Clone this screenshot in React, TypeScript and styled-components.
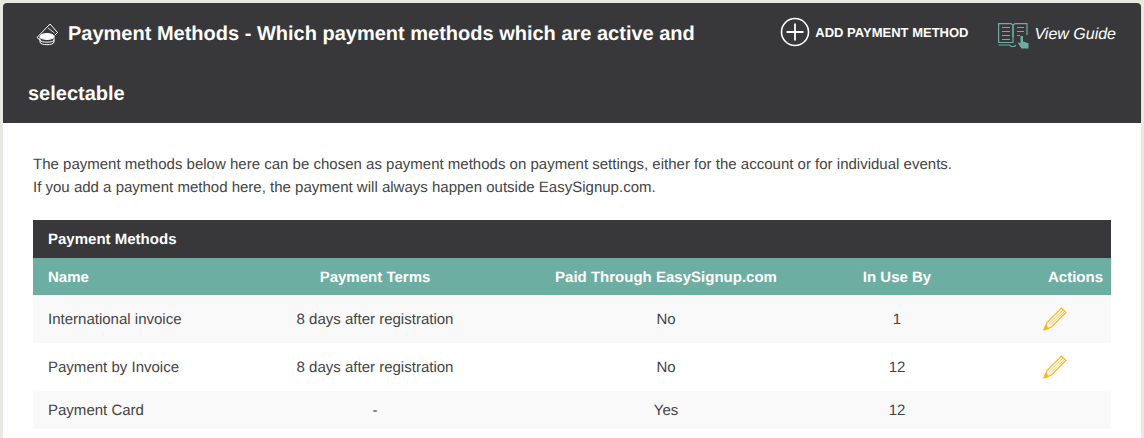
import React from 'react';
import styled, {createGlobalStyle} from 'styled-components';

const GlobalStyle = createGlobalStyle`
  html, body {
    margin: 0;
    padding: 0;
    background: #e9e9e3;
    font-family: "Liberation Sans", Arial, sans-serif;
    text-rendering: geometricPrecision;
  }
`;

const Panel = styled.div`
  margin: 3px 3px 0;
  height: 435px;
  overflow: hidden;
  background: #fff;
  border-radius: 4px 4px 0 0;
`;

const Header = styled.header`
  display: flex;
  justify-content: space-between;
  height: 120px;
  background: #38383a;
  color: #fff;
`;

const Title = styled.h1`
  width: 680px;
  margin: 0;
  padding: 1px 0 0 25px;
  font-size: 20px;
  font-weight: bold;
  line-height: 60px;

  svg {
    width: 22px;
    height: 24px;
    margin: 0 10px 0 8px;
    vertical-align: -6px;
  }
`;

const HeaderActions = styled.div`
  display: flex;
  align-items: flex-start;
  gap: 30px;
  padding: 14px 25px 0 0;
`;

const AddButton = styled.a`
  display: flex;
  align-items: center;
  gap: 5px;
  height: 30px;
  font-size: 13px;
  font-weight: bold;
  color: #fff;

  svg {
    width: 30px;
    height: 30px;
  }
`;

const GuideLink = styled.a`
  display: flex;
  align-items: center;
  gap: 4px;
  height: 36px;
  font-size: 16px;
  font-style: italic;
  color: #fff;

  svg {
    width: 32px;
    height: 28px;
  }
`;

const Content = styled.main`
  padding: 30px 30px 0;
`;

const Intro = styled.p`
  margin: 0 0 21px;
  font-size: 15.02px;
  line-height: 23px;
  color: #444;
`;

const Table = styled.table`
  width: 100%;
  border-collapse: collapse;
  table-layout: fixed;
  font-size: 15.02px;
  color: #444;
`;

const Caption = styled.th`
  height: 38px;
  padding: 0 15px;
  box-sizing: border-box;
  background: #38383a;
  color: #fff;
  text-align: left;
  font-weight: bold;
`;

const HeadCell = styled.th<{$align?: string}>`
  height: 37px;
  box-sizing: border-box;
  padding: 1px 8px 0 ${p => (p.$align === 'left' ? '15px' : '8px')};
  background: #6daea3;
  color: #fff;
  font-weight: bold;
  text-align: ${p => p.$align || 'center'};
`;

const Row = styled.tr<{$striped?: boolean; $short?: boolean}>`
  height: ${p => (p.$short ? '38px' : '48px')};
  background: ${p => (p.$striped ? '#f9f9f9' : '#fff')};
`;

const Cell = styled.td<{$align?: string}>`
  box-sizing: border-box;
  padding: 0 8px 0 ${p => (p.$align === 'left' ? '15px' : '8px')};
  text-align: ${p => p.$align || 'center'};
`;

const EditCell = styled.td`
  padding: 0 44px 0 0;
  text-align: right;

  svg {
    display: inline-block;
    width: 24px;
    height: 24px;
    vertical-align: middle;
  }
`;

const PencilIcon = () => (
    <svg viewBox="0 0 24 24" fill="none" stroke="#fbb615" strokeWidth="1.1">
        <path d="M1.5 22.5 L4 15.5 L18.5 1 L23 5.5 L8.5 20 Z"/>
        <path d="M6 16.5 L20 3 M7.5 18 L21.5 4.5" strokeWidth="0.8"/>
        <path d="M1 23 L2.5 18.5 L5.5 21.5 Z" fill="#fbb615"/>
    </svg>
);

const rows = [
    {name: 'International invoice', terms: '8 days after registration', paid: 'No', use: '1', edit: true},
    {name: 'Payment by Invoice', terms: '8 days after registration', paid: 'No', use: '12', edit: true},
    {name: 'Payment Card', terms: '-', paid: 'Yes', use: '12', edit: false},
];

const App = () => {
    return (
        <>
            <GlobalStyle/>
            <Panel>
                <Header>
                    <Title>
                        <svg viewBox="0 0 22 24" fill="none" stroke="#fff" strokeWidth="1">
                            <path d="M1 15.5 L14 2 L21.5 10.5 L18.5 13.5 M1 15.5 L4 18"/>
                            <path d="M12 6 L18.5 11" strokeWidth="0.8"/>
                            <ellipse cx="11" cy="14.5" rx="7" ry="3" fill="#fff"/>
                            <path d="M4 15 V20 C4 23.6 18 23.6 18 20 V15"/>
                            <path d="M4 17.8 C4 21 18 21 18 17.8"/>
                        </svg>
                        Payment Methods - Which payment methods which are active and selectable
                    </Title>
                    <HeaderActions>
                        <AddButton>
                            <svg viewBox="0 0 30 30" fill="none" stroke="#fff">
                                <circle cx="15" cy="15" r="13.5" strokeWidth="1.6"/>
                                <path d="M15 6.5 V23.5 M6.5 15 H23.5" strokeWidth="1.8"/>
                            </svg>
                            ADD PAYMENT METHOD
                        </AddButton>
                        <GuideLink>
                            <svg viewBox="0 0 32 28" fill="none" stroke="#6daea3" strokeWidth="1.2">
                                <path d="M0.6 2.6 H13 L15 4 V21.5 H0.6 Z M15 4 L17 2.6 H29 V14"/>
                                <path d="M15 4 V16 M0.6 24 H11.5 L13.5 25.5 H16.5 L18 24"/>
                                <path d="M4 6.5 H12 M4 10.5 H12 M4 14.5 H12 M4 18.5 H12 M19 6.5 H26 M19 10.5 H26 M19 14.5 H22"/>
                                <path d="M22.5 15 H25 V20.5 L30.5 22.2 V27.5 H23.5 L19.5 21.5 L22.5 22 Z" fill="#6daea3" stroke="none"/>
                            </svg>
                            View Guide
                        </GuideLink>
                    </HeaderActions>
                </Header>
                <Content>
                    <Intro>
                        The payment methods below here can be chosen as payment methods on payment settings, either for the account or for individual events.
                        <br/>
                        If you add a payment method here, the payment will always happen outside EasySignup.com.
                    </Intro>
                    <Table>
                        <colgroup>
                            <col style={{width: 187}}/>
                            <col style={{width: 310}}/>
                            <col style={{width: 272}}/>
                            <col style={{width: 190}}/>
                            <col style={{width: 119}}/>
                        </colgroup>
                        <thead>
                            <tr>
                                <Caption colSpan={5}>Payment Methods</Caption>
                            </tr>
                            <tr>
                                <HeadCell $align="left">Name</HeadCell>
                                <HeadCell>Payment Terms</HeadCell>
                                <HeadCell>Paid Through EasySignup.com</HeadCell>
                                <HeadCell>In Use By</HeadCell>
                                <HeadCell $align="right">Actions</HeadCell>
                            </tr>
                        </thead>
                        <tbody>
                            {rows.map((row, i) => (
                                <Row key={row.name} $striped={i % 2 === 0} $short={!row.edit}>
                                    <Cell $align="left">{row.name}</Cell>
                                    <Cell>{row.terms}</Cell>
                                    <Cell>{row.paid}</Cell>
                                    <Cell>{row.use}</Cell>
                                    <EditCell>{row.edit && <PencilIcon/>}</EditCell>
                                </Row>
                            ))}
                        </tbody>
                    </Table>
                </Content>
            </Panel>
        </>
    );
};

export default App;
